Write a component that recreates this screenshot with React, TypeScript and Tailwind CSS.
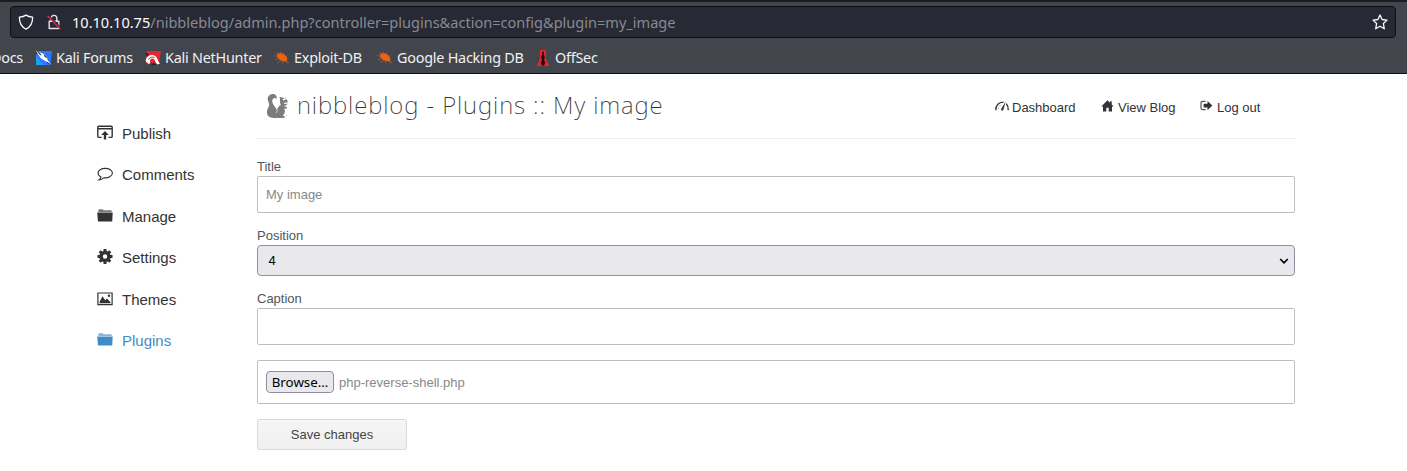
import React from "react";

type IconProps = { className?: string };

const Shield = () => (
  <svg className="h-4 w-4 shrink-0" viewBox="0 0 16 16" fill="none" stroke="#fbfbfe" strokeWidth="1.3" strokeLinejoin="round">
    <path d="M8 1.1C6.2 2.3 3.8 2.9 1.4 3.1C1.2 8.8 3 12.800 8 15.100C13 12.800 14.800 8.800 14.600 3.100C12.200 2.900 9.800 2.300 8 1.100Z" />
  </svg>
);

const BrokenLock = () => (
  <svg className="h-4 w-4 shrink-0" viewBox="0 0 16 16" fill="none">
    <path d="M5.200 7V4.200a2.800 2.800 0 0 1 5.600 0V7M3.200 7.200h9.600v7.300H3.200z" stroke="#e4e4ea" strokeWidth="1.400" strokeLinejoin="round" />
    <path d="M2.500 1.500L15 14" stroke="#272934" strokeWidth="1.500" />
    <path d="M1.500 1.800L14.500 15.300" stroke="#e22850" strokeWidth="1.300" />
  </svg>
);

const Star = () => (
  <svg className="h-4 w-4 shrink-0" viewBox="0 0 16 16" fill="none" stroke="#fbfbfe" strokeWidth="1.300" strokeLinejoin="round">
    <path d="M8 1l2.100 4.500 4.900.6-3.600 3.400.9 5.300L8 12.300l-4.300 2.500.9-5.300L1 6.100l4.900-.6z" />
  </svg>
);

const KaliBlue = () => (
  <svg className="h-4 w-4 shrink-0" viewBox="0 0 16 16">
    <path d="M3 1h13l-1.500 14H0V5z" fill="#2777ff" />
    <path d="M0 6l8 9H0z" fill="#1ba0f5" />
    <path d="M0 .5l3.500 1.700L8 4l3 3 .5 3L15.500 15l-4-2.500-3-2L5 8.500 2.500 5z" fill="#fff" />
    <path d="M0 .5l3 1.800L6 5.500l-2-.6zM7.500 4l3 2.500.5 2-2.500-2zM10 11l5.500 4-3.500-1.300z" fill="#26303d" />
  </svg>
);

const KaliRed = () => (
  <svg className="h-4 w-4 shrink-0" viewBox="0 0 16 16">
    <path d="M2 1h14l-2 12.500H1z" fill="#e9262f" />
    <path d="M0 2.500l3.500 1.500L2.500 7zM5 15h6l-1-2z" fill="#222" />
    <path d="M.8 11.500C.5 7 4.500 4.500 8.500 5.200C12.500 6 12 10 15 13.500L12.500 14.500C9.500 12.500 10.500 8.800 7.500 8.500C5 8.500 4.300 10.500 5.500 12.200L4 14.200z" fill="#fff" />
    <path d="M3.500 9.500C4.500 7.300 7 6.500 9.500 7.500M5.500 12l2 1.500 1.800-1.300" fill="none" stroke="#29242a" strokeWidth=".7" />
  </svg>
);

const Bug = () => (
  <svg className="h-4 w-4 shrink-0" viewBox="0 0 16 16">
    <path d="M3.500 3.500l4-.2 3.500 1.700 2.500 3.500-1 3-3.500-.2L5 9.300 3 6.500z" fill="#f2600e" />
    <path d="M0 5.500l4 1M1 9.500l4-1M3 12.500l4-2M8 13.500l1-3M6 1.500l1 2.500M9 2.500l1 2.500M13 5.500l-1 2M12 11l3 1.500M5 3.500L2 3M12 10l2 3.500" stroke="#b5683c" strokeWidth=".6" />
  </svg>
);

const OffSecMark = () => (
  <svg className="h-4 w-4 shrink-0" viewBox="0 0 16 16">
    <path d="M5 0h6v9l3.500 7H1.500L5 9z" fill="#e3262d" />
    <path d="M7.200 1.500h1.600v3l1 2-.7 4 1.200 2L9 15.500H7l-1.400-3L7 10.500l-.8-4 1-2z" fill="#28090c" />
  </svg>
);

const Squirrel = () => (
  <svg className="h-[26px] w-[24px] shrink-0" viewBox="0 0 24 26" fill="#7c7c7c">
    <path d="M11.600 5.800C12.300 3 10.500.8 7.800.9C4.500 1 2.500 3.500 2.700 6.200C2.900 8.800 4.300 10 4.200 12C4 14.200 2 15.500 1.900 19C1.800 22.500 4.500 24.900 8.500 24.900H19.500C20.200 23.700 19.300 22.800 17.700 22.800C19.800 21 20.500 18 19.300 15.500L21.700 15.700C22.200 14.600 21.700 13.800 20.700 13.600L18.500 13.200C20.500 12.700 22 11.800 22.600 10.500L19.500 10.900L18.700 9.800L22.300 9.500C23.200 8.300 22.500 7 21.300 6.200L18.500 7.600L17.500 6.800L19.500 5L16.800 4.600L14.600 3.700L15 6.500C14.600 8.500 15.200 10.500 15.800 12C14 13 12.600 14.500 12 16.800C10.400 14 7.400 11.500 7.200 8.300C7.100 5.500 9.700 3.800 11.600 5.800Z" />
    <path d="M19.600 5l1.800-.8-.4 1.500z" fill="#aaa" />
    <path d="M12 16C12.300 17.500 12 18.800 11.200 20" stroke="#fff" strokeWidth=".6" fill="none" />
    <circle cx="21.300" cy="22.700" r=".5" />
  </svg>
);

const Gauge = () => (
  <svg className="h-[12px] w-[14px]" viewBox="0 0 14 12" fill="none" stroke="#333">
    <path d="M.8 10.300C.8 5.300 3.500 2.300 8.500 2.100" strokeWidth="1.400" />
    <path d="M11.300 3.600c1.300 1.500 2 3.700 2 6.700" strokeWidth="1.400" />
    <path d="M10.700 1.500L8.400 9.700C7.800 11.200 5.600 10.600 6.100 9z" fill="#333" stroke="none" />
    <path d="M3 8l1 .5M4.500 5l.8.8" strokeWidth=".7" />
  </svg>
);

const Home = () => (
  <svg className="h-[12px] w-[13px]" viewBox="0 0 13 12" fill="#333">
    <path d="M6.500.3L.3 6.500h1.700v4.900H5.300V7.800h2.400v3.600h3.300V6.500h1.700L10.700 4.500V1.200H9v1.600z" />
  </svg>
);

const Exit = () => (
  <svg className="h-[12px] w-[13px]" viewBox="0 0 13 12" fill="#333">
    <path d="M5.500 1.300H2.700C1.500 1.300 1 1.800 1 3v5c0 1.200.5 1.700 1.700 1.700H5.500" fill="none" stroke="#555" strokeWidth="1.200" />
    <path d="M3.600 3.700h3.900V1l4.800 4.600-4.800 4.600V7.500H3.600z" />
  </svg>
);

const Publish = ({ className = "" }: IconProps) => (
  <svg className={className} viewBox="0 0 16 16">
    <path d="M4.500 12.400H1.800c-.6 0-1-.4-1-1V2.200c0-.6.4-1 1-1h12.400c.6 0 1 .4 1 1v9.200c0 .6-.4 1-1 1H11.500M1 3.700h14" fill="none" stroke="currentColor" strokeWidth="1.400" />
    <path d="M8 6l3.800 4H9.200V14.500H6.800V10H4.200z" fill="currentColor" />
  </svg>
);

const Comment = ({ className = "" }: IconProps) => (
  <svg className={className} viewBox="0 0 16 16" fill="none" stroke="currentColor" strokeWidth="1.100">
    <path transform="translate(0 .6)" d="M8.300 1.800C4.300 1.800 1 3.800 1 6.500C1 8.200 2.200 9.600 4 10.500C3.800 11.600 3 12.500 1.900 13.300C4 13.200 5.400 12.400 6.700 11.200C11.500 11.700 15.400 9.500 15.400 6.500C15.400 3.800 12.200 1.800 8.300 1.800Z" />
  </svg>
);

const Folder = ({ className = "" }: IconProps) => (
  <svg className={className} viewBox="0 0 16 16" fill="currentColor">
    <path d="M.3 4.500h15.400l-.5 9H.9z" />
    <path d="M1.300 3.900V2.200C1.300 1.600 1.800 1.200 2.300 1.200h3.400l1 1.100h7c.6 0 1 .4 1 .9v.7z" opacity=".65" />
  </svg>
);

const Cog = ({ className = "" }: IconProps) => (
  <svg className={className} viewBox="0 0 16 16">
    <circle cx="8" cy="7.500" r="4" fill="none" stroke="currentColor" strokeWidth="3.600" />
    <path d="M8 0v3M8 12v3M.5 7.500h3M12.500 7.500h3M2.700 2.200L5 4.500M11 10.500l2.300 2.300M13.300 2.200L11 4.500M5 10.500l-2.300 2.300" stroke="currentColor" strokeWidth="3" />
  </svg>
);

const Picture = ({ className = "" }: IconProps) => (
  <svg className={className} viewBox="0 0 16 16">
    <path d="M.9 2h14.200v11.600H.9z" fill="none" stroke="currentColor" strokeWidth="1.200" />
    <path d="M2.500 12.200V11L5.500 5.300 8.300 9.200l1.700-1.700 3.500 3.700v1z" fill="currentColor" />
    <circle cx="12" cy="4.700" r="1.200" fill="currentColor" />
  </svg>
);

const bookmarks = [
  { label: "Kali Forums", icon: KaliBlue, width: "w-[109px]" },
  { label: "Kali NetHunter", icon: KaliRed, width: "w-[129px]" },
  { label: "Exploit-DB", icon: Bug, width: "w-[103px]" },
  { label: "Google Hacking DB", icon: Bug, width: "w-[158px]" },
  { label: "OffSec", icon: OffSecMark, width: "w-[80px]" },
];

const menu = [
  { label: "Publish", icon: Publish },
  { label: "Comments", icon: Comment },
  { label: "Manage", icon: Folder },
  { label: "Settings", icon: Cog },
  { label: "Themes", icon: Picture },
  { label: "Plugins", icon: Folder, active: true },
];

function BrowserBar() {
  return (
    <header className="h-[74px] border-t-2 border-b border-t-[#1c1c23] border-b-[#101116] bg-[#42454b] font-['Noto_Sans',sans-serif]">
      <div className="mr-[11px] ml-[10px] mt-1 flex h-8 items-center rounded-[4px] border border-[#0e0f15] bg-[#272934] px-[7px]">
        <Shield />
        <span className="ml-3 flex"><BrokenLock /></span>
        <div className="ml-[10px] flex-1 text-[14.56px] leading-5 whitespace-nowrap text-[#898a92]">
          <span className="text-[#fbfbfe]">10.10.10.75</span>/nibbleblog/admin.php?controller=plugins&amp;action=config&amp;plugin=my_image
        </div>
        <Star />
      </div>
      <nav className="flex h-[35px] items-center overflow-hidden pt-1 text-[14.4px] leading-5 tracking-[-0.24px] whitespace-nowrap text-[#f0f0f3]">
        <div className="flex w-9 shrink-0 justify-end pr-[13px]">Docs</div>
        {bookmarks.map(({ label, icon: Icon, width }) => (
          <div key={label} className={`flex shrink-0 items-center gap-1 ${width}`}>
            <Icon />
            <span>{label}</span>
          </div>
        ))}
      </nav>
    </header>
  );
}

export default function App() {
  return (
    <div className="h-[471px] overflow-hidden bg-white font-['Liberation_Sans',Arial,sans-serif] text-[13px] text-[#333]">
      <BrowserBar />
      <div className="flex pl-24">
        <aside className="w-[161px] shrink-0 pt-[39px] text-[15px]">
          {menu.map(({ label, icon: Icon, active }) => (
            <a key={label} className={`flex h-[41.4px] items-start gap-[9px] ${active ? "text-[#428bca]" : ""}`}>
              <Icon className="mt-[12px] ml-[1px] h-4 w-4" />
              <span className="mt-[11px] leading-5">{label}</span>
            </a>
          ))}
        </aside>
        <main className="w-[1038px]">
          <div className="flex h-[65px] border-b border-[#eee] pt-[19px] pl-[8px]">
            <Squirrel />
            <h1 className="-mt-[2px] ml-2 w-[698px] text-[24px] leading-[27px] font-extralight tracking-[0.9px] whitespace-nowrap font-['Noto_Sans',sans-serif]">
              nibbleblog - Plugins :: My image
            </h1>
            <nav className="flex pt-[7px] leading-[15px] whitespace-nowrap">
              <a className="flex w-[106px] gap-[3px]"><Gauge />Dashboard</a>
              <a className="flex w-[99px] gap-[4px]"><Home />View Blog</a>
              <a className="flex gap-[4px]"><Exit />Log out</a>
            </nav>
          </div>
          <form className="flex flex-col text-[#555]">
            <label className="mt-[19px] h-[18px] leading-[17px]">Title</label>
            <div className="flex h-[37px] items-center rounded-[2px] border border-[#bfbfbf] pl-2 text-[#888]">My image</div>
            <label className="mt-[14px] h-[18px] leading-[17px]">Position</label>
            <div className="flex h-[31px] items-center justify-between rounded-[4px] border border-[#8f8f9d] bg-[#e9e9ed] pr-[5px] pl-[10.5px] text-black">
              4
              <svg className="h-[10px] w-[10px]" viewBox="0 0 10 10" fill="none" stroke="#000" strokeWidth="1.600"><path d="M1.200 3L5 6.800 8.800 3" /></svg>
            </div>
            <label className="mt-[14px] h-[18px] leading-[17px]">Caption</label>
            <div className="h-[37px] rounded-[2px] border border-[#bfbfbf]" />
            <div className="mt-[15px] flex h-[44px] items-center rounded-[2px] border border-[#bfbfbf] pl-2 text-[#888]">
              <button type="button" className="mr-[5px] h-[22px] w-[68px] rounded-[4px] border border-[#8f8f9d] bg-[#e9e9ed] text-[13.33px] leading-5 text-black font-['Noto_Sans',sans-serif]">Browse…</button>
              <span className="pt-[2px]">php-reverse-shell.php</span>
            </div>
            <button type="button" className="mt-[15px] h-[31px] w-[150px] rounded-[2px] border border-[#d9d9d9] bg-linear-to-b from-[#f5f5f5] to-[#f0f0f0] text-[#444]">Save changes</button>
          </form>
        </main>
      </div>
    </div>
  );
}
